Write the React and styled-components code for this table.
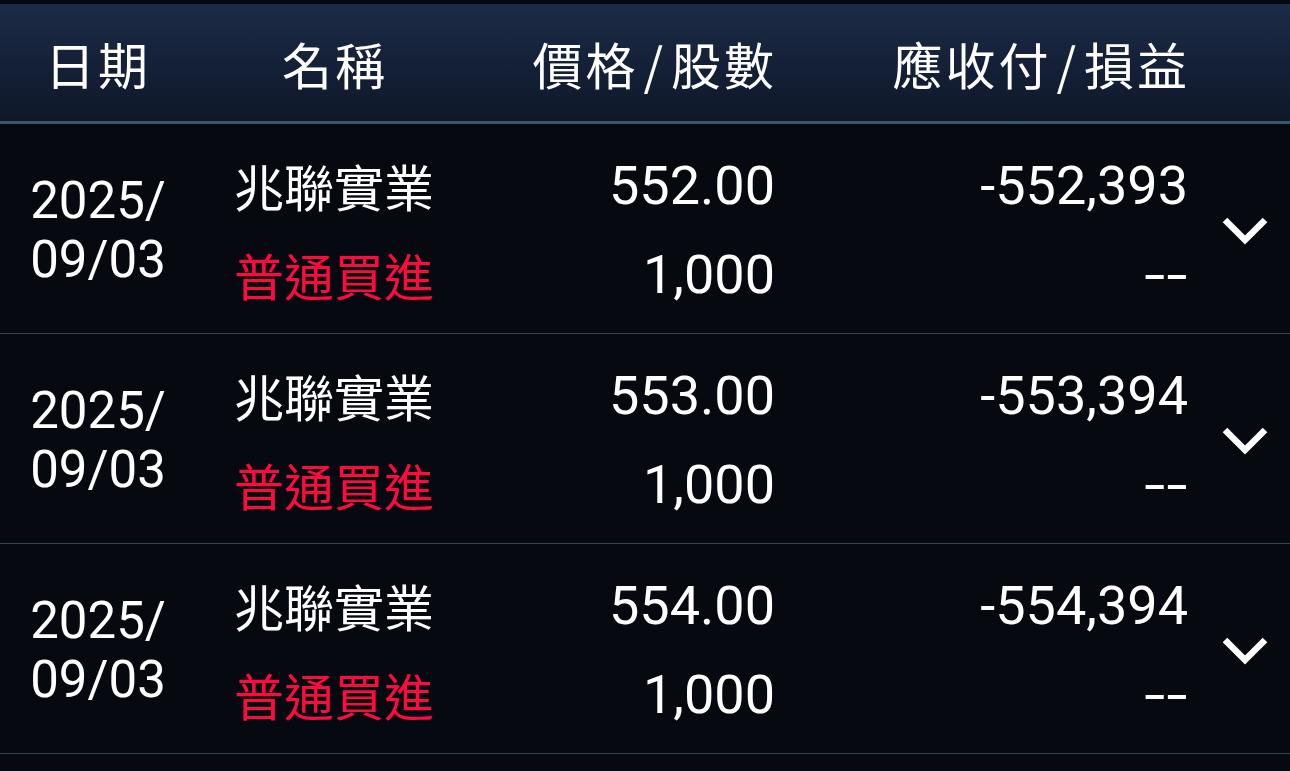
import React from "react";
import styled, { createGlobalStyle } from "styled-components";

const Global = createGlobalStyle`
  html, body { margin: 0; padding: 0; background: #06090f; }
  body { font-family: Roboto, "Noto Sans CJK TC", sans-serif; color: #fff; }
  * { box-sizing: border-box; }
`;

const Page = styled.div`
  width: 1290px;
  height: 771px;
  overflow: hidden;
  background: #06090f;
  padding-top: 4px;
`;

const cols = `196px 237px 340px 413px 104px`;

const Header = styled.div`
  display: grid;
  grid-template-columns: ${cols};
  align-items: center;
  height: 120px;
  background: linear-gradient(180deg, #1c2b46 0%, #142037 55%, #0e1828 100%);
  border-bottom: 3px solid #3b5669;
  font-family: "Noto Sans CJK TC", sans-serif;
  font-size: 50px;
  color: #fff;
  letter-spacing: 3px;
`;

const HeadCell = styled.div`
  text-align: ${(p) => p.$align || "center"};
  padding-left: ${(p) => p.$pl || 0}px;
  margin-right: ${(p) => (p.$align === "right" ? -4 : 0)}px;
  white-space: nowrap;
`;

const Slash = styled.span`
  padding: 0 5px;
`;

const Row = styled.div`
  display: grid;
  grid-template-columns: ${cols};
  align-items: center;
  height: 210px;
  border-bottom: 1px solid #334352;
`;

const DateCell = styled.div`
  text-align: center;
  font-size: 51px;
  line-height: 59px;
  padding-top: 2px;
`;

const Stack = styled.div`
  display: flex;
  flex-direction: column;
  align-items: ${(p) => (p.$right ? "flex-end" : "flex-start")};
  padding-left: ${(p) => p.$pl || 0}px;
  margin-right: ${(p) => (p.$right ? -2 : 0)}px;
  padding-top: 2px;
`;

const Line = styled.div`
  height: 89px;
  line-height: 89px;
  white-space: nowrap;
  font-family: ${(p) => (p.$cjk ? `"Noto Sans CJK TC", sans-serif` : `Roboto, sans-serif`)};
  font-size: ${(p) => (p.$cjk ? 50 : 54)}px;
  color: ${(p) => p.$color || "#fff"};
`;

const Dashes = styled(Line)`
  letter-spacing: 1px;
  margin-right: -1px;
  transform: scaleX(1.4);
  transform-origin: right center;
`;

const ChevronCell = styled.div`
  display: flex;
  justify-content: center;
  padding-left: 14px;
  padding-top: 2px;
`;

const Chevron = () => (
  <svg width="46" height="30" viewBox="0 0 46 30">
    <path d="M3 5 L23 25 L43 5" fill="none" stroke="#fff" strokeWidth="6.5" strokeLinejoin="miter" />
  </svg>
);

const rows = [
  { price: "552.00", qty: "1,000", amt: "-552,393" },
  { price: "553.00", qty: "1,000", amt: "-553,394" },
  { price: "554.00", qty: "1,000", amt: "-554,394" },
];

export default function App() {
  return (
    <Page>
      <Global />
      <Header>
        <HeadCell>日期</HeadCell>
        <HeadCell $pl={41}>名稱</HeadCell>
        <HeadCell $align="right">
          價格<Slash>/</Slash>股數
        </HeadCell>
        <HeadCell $align="right">
          應收付<Slash>/</Slash>損益
        </HeadCell>
        <HeadCell />
      </Header>
      {rows.map((r, i) => (
        <Row key={i}>
          <DateCell>
            2025/
            <br />
            09/03
          </DateCell>
          <Stack $pl={38}>
            <Line $cjk>兆聯實業</Line>
            <Line $cjk $color="#ff0a40">普通買進</Line>
          </Stack>
          <Stack $right>
            <Line>{r.price}</Line>
            <Line>{r.qty}</Line>
          </Stack>
          <Stack $right>
            <Line>{r.amt}</Line>
            <Dashes>--</Dashes>
          </Stack>
          <ChevronCell>
            <Chevron />
          </ChevronCell>
        </Row>
      ))}
    </Page>
  );
}
